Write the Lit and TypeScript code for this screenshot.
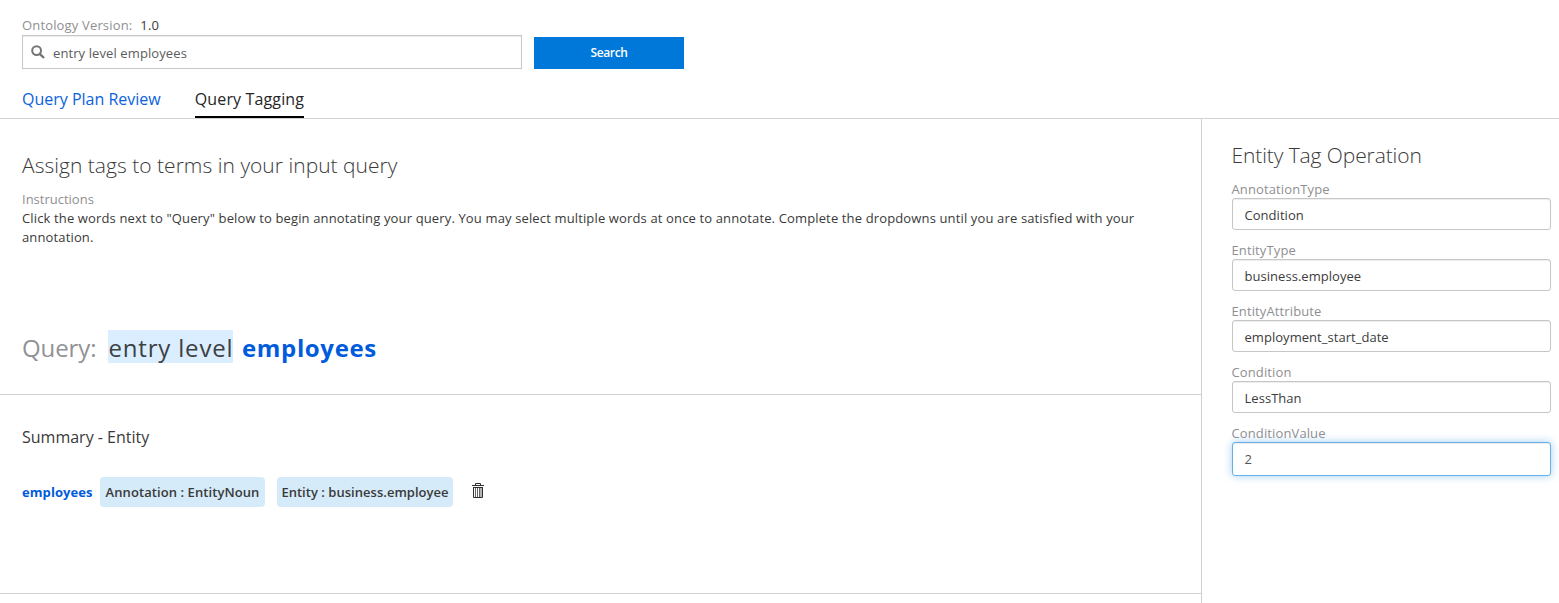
import { LitElement, html, css } from "lit";
import { customElement, property, state } from "lit/decorators.js";
import { classMap } from "lit/directives/class-map.js";

@customElement("tag-field")
class TagField extends LitElement {
  @property() label = "";
  @property() value = "";
  @property({ type: Boolean }) active = false;

  static styles = css`
    :host { display: block; }
    .label { height: 19px; line-height: 20px; color: #8f8f92; letter-spacing: 0.12px; margin-left: -0.5px; white-space: nowrap; }
    .box {
      box-sizing: border-box; height: 32px; line-height: 32px; padding-left: 11.5px;
      border: 1px solid #c6c6c6; border-radius: 3px; background: #fff; color: #3c3c3c;
      box-shadow: inset 0 1px 1px rgba(0, 0, 0, 0.075); white-space: nowrap; letter-spacing: 0.04px;
    }
    .box.active {
      height: 34px; line-height: 33px; border-color: #66afe9; color: #555;
      box-shadow: inset 0 1px 1px rgba(0, 0, 0, 0.075), 0 0 8px rgba(102, 175, 233, 0.6);
    }
  `;

  render() {
    return html`
      <div class="label">${this.label}</div>
      <div class=${classMap({ box: true, active: this.active })}>${this.value}</div>
    `;
  }
}

@customElement("app-root")
class AppRoot extends LitElement {
  @state() fields = [
    ["AnnotationType", "Condition"],
    ["EntityType", "business.employee"],
    ["EntityAttribute", "employment_start_date"],
    ["Condition", "LessThan"],
    ["ConditionValue", "2"],
  ];

  static styles = css`
    :host {
      display: flex; flex-direction: column; height: 603px; overflow: hidden; background: #fff;
      font: 13px/19px "Open Sans", "Noto Sans", sans-serif; color: #3a3a3a;
    }
    .top { box-sizing: border-box; height: 119px; padding: 15px 22px 0; border-bottom: 1px solid #d3d3d3; display: flex; flex-direction: column; }
    .version { height: 20px; line-height: 21px; display: flex; gap: 8px; color: #8f8f92; letter-spacing: 0.16px; }
    .version .number { color: #3a3a3a; }
    .search-row { display: flex; align-items: flex-end; gap: 12px; height: 34px; }
    .search { box-sizing: border-box; width: 500px; height: 34px; border: 1px solid #c6c6c6; box-shadow: inset 0 1px 1px rgba(0, 0, 0, 0.075); padding-left: 8px; display: flex; align-items: center; gap: 8px; color: #5c5c5c; letter-spacing: 0.1px; }
    .search svg { display: block; margin-bottom: 1px; }
    .search .text { line-height: 30px; padding-top: 2px; }
    .button { width: 150px; height: 32px; line-height: 32px; background: #0078d9; color: #fff; text-align: center; font-weight: 600; font-size: 12px; letter-spacing: -0.35px; }
    .tabs { display: flex; gap: 34px; margin-top: 17px; height: 32px; font-size: 16px; line-height: 26px; }
    .tab { color: #0b62de; box-sizing: border-box; height: 32px; white-space: nowrap; }
    .tab.current { color: #262626; border-bottom: 2px solid #000; letter-spacing: 0.14px; }
    .body { flex: 1; display: flex; min-height: 0; }
    .main { width: 1201px; flex: none; }
    .annotate { box-sizing: border-box; height: 276px; padding: 31px 22px 0; border-bottom: 1px solid #d3d3d3; }
    .title { font-weight: 300; font-size: 21px; line-height: 30px; white-space: nowrap; color: #3a3a3a; letter-spacing: 0.02px; }
    .caption { margin-top: 10px; color: #8f8f92; }
    .help { letter-spacing: 0.14px; }
    .query { display: flex; margin-top: 83px; height: 33px; line-height: 36px; font-size: 24px; white-space: nowrap; }
    .query .lead { color: #929295; width: 86px; letter-spacing: -0.1px; }
    .query .picked { box-sizing: border-box; width: 125px; padding-left: 0.5px; background: #dbeeff; color: #3c4043; letter-spacing: 0.82px; }
    .query .tagged { color: #005bdc; font-weight: 700; margin-left: 9px; letter-spacing: 0.65px; }
    .summary { box-sizing: border-box; height: 199px; padding: 30px 22px 0; border-bottom: 1px solid #d3d3d3; }
    .summary .heading { font-size: 16px; line-height: 24px; }
    .row { display: flex; align-items: center; margin-top: 28px; height: 30px; white-space: nowrap; }
    .row svg { display: block; margin-bottom: 3px; }
    .term { color: #005bdc; font-weight: 700; width: 78px; letter-spacing: 0.08px; }
    .chip { box-sizing: border-box; height: 30px; line-height: 30px; border-radius: 4px; background: #d5ebf9; font-weight: 600; text-align: center; }
    .chip.annotation { width: 165px; margin-right: 12px; letter-spacing: 0.08px; }
    .chip.entity { width: 176px; margin-right: 19px; letter-spacing: 0.03px; }
    .side { box-sizing: border-box; flex: 1; border-left: 1px solid #cfcfcf; padding: 21px 8px 0 30px; display: flex; flex-direction: column; gap: 10px; }
    .side .title { margin: 0 0 -1px -0.5px; letter-spacing: -0.1px; }
  `;

  render() {
    return html`
      <div class="top">
        <div class="version"><span>Ontology Version:</span><span class="number">1.0</span></div>
        <div class="search-row">
          <div class="search">
            <svg width="14" height="14" viewBox="0 0 14 14" fill="none" stroke="#757575">
              <circle cx="5.6" cy="5.6" r="4.4" stroke-width="2" />
              <path d="M8.8 8.8 L13 13" stroke-width="2.4" />
            </svg>
            <span class="text">entry level employees</span>
          </div>
          <div class="button">Search</div>
        </div>
        <div class="tabs">
          <div class="tab">Query Plan Review</div>
          <div class="tab current">Query Tagging</div>
        </div>
      </div>
      <div class="body">
        <div class="main">
          <div class="annotate">
            <div class="title">Assign tags to terms in your input query</div>
            <div class="caption">Instructions</div>
            <div class="help">Click the words next to "Query" below to begin annotating your query. You may select multiple words at once to annotate. Complete the dropdowns until you are satisfied with your annotation.</div>
            <div class="query">
              <span class="lead">Query:</span><span class="picked">entry level</span><span class="tagged">employees</span>
            </div>
          </div>
          <div class="summary">
            <div class="heading">Summary - Entity</div>
            <div class="row">
              <span class="term">employees</span>
              <span class="chip annotation">Annotation : EntityNoun</span>
              <span class="chip entity">Entity : business.employee</span>
              <svg width="12" height="15" viewBox="0 0 12 15" fill="none" stroke="#2f2f2f">
                <path d="M3.5 3V.5H8.5V3" />
                <path d="M0 2.5H12" />
                <path d="M1.5 4V14.5H10.5V4" />
                <path d="M1 4.5H11" />
                <path d="M3.5 5V14M5.5 5V14M7.5 5V14M9 5V14" stroke="#666" />
              </svg>
            </div>
          </div>
        </div>
        <div class="side">
          <div class="title">Entity Tag Operation</div>
          ${this.fields.map(
            ([label, value], i) => html`<tag-field .label=${label} .value=${value} ?active=${i === this.fields.length - 1}></tag-field>`
          )}
        </div>
      </div>
    `;
  }
}
